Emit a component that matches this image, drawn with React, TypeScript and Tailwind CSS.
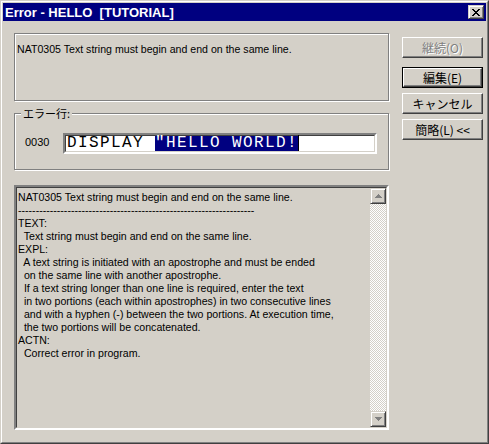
const sans = "font-['Liberation_Sans','Noto_Sans_CJK_JP',sans-serif]";
const jp = "font-['Noto_Sans_CJK_JP',sans-serif]";

// classic 3d borders
const etched = "border border-[#808080] shadow-[inset_1px_1px_0_#fff,1px_1px_0_#fff]";
const sunken =
  "border-2 border-t-[#808080] border-l-[#808080] border-r-white border-b-white";
const sunkenInner =
  "h-full border border-t-[#404040] border-l-[#404040] border-r-[#d4d0c8] border-b-[#d4d0c8]";
const raised =
  "border border-t-white border-l-white border-r-[#404040] border-b-[#404040] shadow-[inset_-1px_-1px_0_#808080]";
const smallBtn =
  "flex items-center justify-center bg-[#d4d0c8] border border-t-[#d4d0c8] border-l-[#d4d0c8] border-r-[#404040] border-b-[#404040] shadow-[inset_1px_1px_0_#fff,inset_-1px_-1px_0_#808080]";

const detail = [
  "NAT0305 Text string must begin and end on the same line.",
  "-------------------------------------------------------------------",
  "TEXT:",
  "  Text string must begin and end on the same line.",
  "EXPL:",
  "  A text string is initiated with an apostrophe and must be ended",
  "  on the same line with another apostrophe.",
  "  If a text string longer than one line is required, enter the text",
  "  in two portions (each within apostrophes) in two consecutive lines",
  "  and with a hyphen (-) between the two portions. At execution time,",
  "  the two portions will be concatenated.",
  "ACTN:",
  "  Correct error in program.",
];

function DlgButton({
  label,
  disabled,
  isDefault,
}: {
  label: string;
  disabled?: boolean;
  isDefault?: boolean;
}) {
  const face = (
    <div
      className={`h-full w-full flex items-center justify-center ${raised} ${jp} text-[12px] leading-none ${
        disabled ? "text-[#808080] [text-shadow:1px_1px_0_#fff]" : "text-black"
      }`}
    >
      {label}
    </div>
  );
  if (isDefault) {
    return <div className="h-[21px] w-[81px] border border-black">{face}</div>;
  }
  return <div className="h-[21px] w-[81px]">{face}</div>;
}

export default function App() {
  return (
    <div className="w-[489px] h-[444px] bg-[#d4d0c8] border border-t-[#d4d0c8] border-l-[#d4d0c8] border-r-[#404040] border-b-[#404040]">
      <div className="h-full flex flex-col border border-t-white border-l-white border-r-[#808080] border-b-[#808080] p-px">
        {/* title bar */}
        <div className="h-[18px] shrink-0 bg-[#000080] flex items-center justify-between pl-[2px] pr-[2px]">
          <span className={`${sans} text-white font-bold text-[13px] leading-none whitespace-pre`}>
            {"Error - HELLO  [TUTORIAL]"}
          </span>
          <div className={`w-[16px] h-[14px] ${smallBtn}`}>
            <svg width="8" height="7" viewBox="0 0 8 7" shapeRendering="crispEdges">
              <path d="M0 0h2v1h-2zM6 0h2v1h-2zM1 1h2v1h-2zM5 1h2v1h-2zM2 2h4v1h-4zM3 3h2v1h-2zM2 4h4v1h-4zM1 5h2v1h-2zM5 5h2v1h-2zM0 6h2v1h-2zM6 6h2v1h-2z" fill="#000" />
            </svg>
          </div>
        </div>

        {/* client area */}
        <div className="flex-1 flex pt-[12px] pl-[11px]">
          <div className="w-[375px] flex flex-col">
            <div className={`h-[68px] ${etched} pl-[2px] pt-[9px]`}>
              <p className={`${sans} text-[10.6px] leading-[13px] text-black`}>
                NAT0305 Text string must begin and end on the same line.
              </p>
            </div>

            <div className={`relative mt-[12px] h-[57px] ${etched} flex items-center pl-[10px]`}>
              <span className={`absolute left-[6px] top-[-7px] bg-[#d4d0c8] px-[2px] ${jp} text-[11px] leading-[13px] text-black`}>
                エラー行:
              </span>
              <span className={`${sans} text-[11px] leading-[13px] text-black w-[38px] pt-[1px]`}>0030</span>
              <div className={`w-[314px] h-[21px] ${sunken} mt-[3px]`}>
                <div className={`${sunkenInner} bg-white pl-px flex items-center font-['Liberation_Mono',monospace] text-[16px] tracking-[1.4px] leading-[15px] whitespace-pre`}>
                  <span className="text-black">DISPLAY </span>
                  <span className="bg-[#000080] text-white">"HELLO WORLD!</span>
                  <span className="inline-block w-px h-[16px] bg-black" />
                </div>
              </div>
            </div>

            <div className={`mt-[15px] h-[245px] ${sunken}`}>
              <div className={`${sunkenInner} flex`}>
                <div className={`flex-1 pl-px pt-[3px] ${sans} text-[10.6px] leading-[13px] text-black whitespace-pre overflow-hidden`}>
                  {detail.map((line, i) => (
                    <div key={i}>{line}</div>
                  ))}
                </div>
                <div className="w-[16px] flex flex-col bg-[repeating-conic-gradient(#ffffff_0%_25%,#d4d0c8_0%_50%)] bg-[length:2px_2px]">
                  <div className={`w-[16px] h-[16px] ${smallBtn}`}>
                    <svg width="7" height="4" viewBox="0 0 7 4" shapeRendering="crispEdges">
                      <path d="M3 0h1v1h1v1h1v1h1v1h-7v-1h1v-1h1v-1h1z" fill="#808080" />
                    </svg>
                  </div>
                  <div className="flex-1" />
                  <div className={`w-[16px] h-[16px] ${smallBtn}`}>
                    <svg width="7" height="4" viewBox="0 0 7 4" shapeRendering="crispEdges">
                      <path d="M0 0h7v1h-1v1h-1v1h-1v1h-1v-1h-1v-1h-1v-1h-1z" fill="#808080" />
                    </svg>
                  </div>
                </div>
              </div>
            </div>
          </div>

          <div className="ml-[13px] flex flex-col pt-[4px]">
            <DlgButton label="継続(O)" disabled />
            <div className="mt-[9px]">
              <DlgButton label="編集(E)" isDefault />
            </div>
            <div className="mt-[5px]">
              <DlgButton label="キャンセル" />
            </div>
            <div className="mt-[5px]">
              <DlgButton label="簡略(L) <<" />
            </div>
          </div>
        </div>
      </div>
    </div>
  );
}
